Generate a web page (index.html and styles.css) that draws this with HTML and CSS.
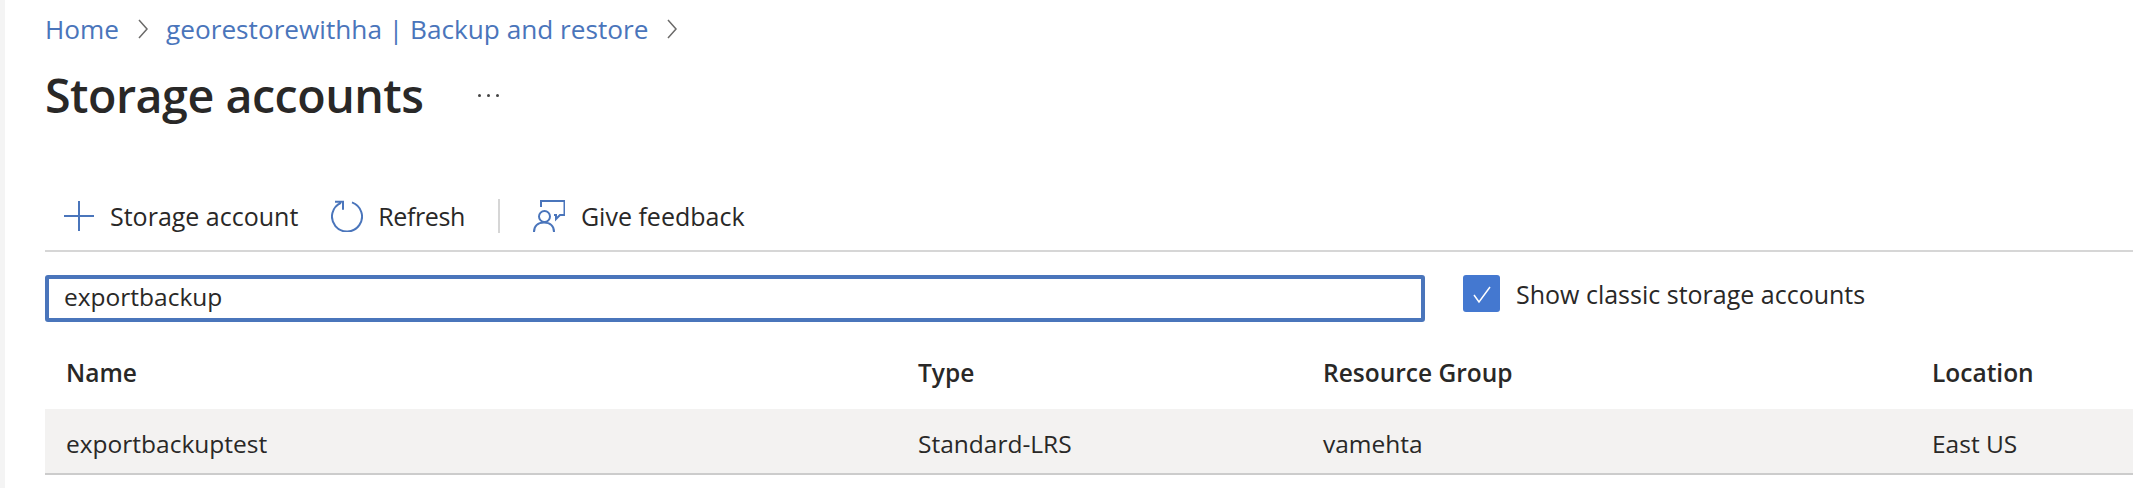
FILE: index.html

```html
<!DOCTYPE html>
<html lang="en">
<head>
    <meta charset="UTF-8">
    <title>Storage accounts</title>
    <link rel="stylesheet" href="styles.css">
</head>
<body>

<div class="page">
    <nav class="crumbs">
        <a>Home</a>
        <svg class="chev" viewBox="0 0 12 22"><path d="M2 2l8 9-8 9"/></svg>
        <a>georestorewithha | Backup and restore</a>
        <svg class="chev" viewBox="0 0 12 22"><path d="M2 2l8 9-8 9"/></svg>
    </nav>

    <div class="title-row">
        <h1>Storage accounts</h1>
        <span class="more">
            <i></i><i></i><i></i>
        </span>
    </div>

    <div class="toolbar">
        <div class="tool tool-add">
            <svg class="icon" viewBox="0 0 32 32"><path d="M16 1v30M1 16h30"/></svg>
            <span>Storage account</span>
        </div>
        <div class="tool tool-refresh">
            <svg class="icon" viewBox="0 0 32 32"><path d="M21 2.400A15 15 0 1 1 10 2.800M4 1.700h8v8"/></svg>
            <span>Refresh</span>
        </div>
        <div class="sep"></div>
        <div class="tool tool-feedback">
            <svg class="icon" viewBox="0 0 32 32"><path d="M8 7V1h23.500v14H27l-4 4v-4h-2M1 32c0-6 4-9.500 10-9.500s10 3.500 10 9.500M11.500 22a5.500 5.500 0 1 0 0-11 5.500 5.500 0 0 0 0 11"/></svg>
            <span>Give feedback</span>
        </div>
    </div>

    <div class="filters">
        <div class="search">exportbackup</div>
        <div class="classic">
            <span class="check"><svg viewBox="0 0 24 24"><path d="M4 13l5 7 11-15"/></svg></span>
            <span>Show classic storage accounts</span>
        </div>
    </div>

    <div class="row head">
        <div>Name</div>
        <div>Type</div>
        <div>Resource Group</div>
        <div>Location</div>
    </div>
    <div class="row item">
        <div>exportbackuptest</div>
        <div>Standard-LRS</div>
        <div>vamehta</div>
        <div>East US</div>
    </div>
</div>

</body>
</html>
```

FILE: styles.css

```css
body {
    margin: 0;
    background: #fff;
    color: #292827;
    font-family: "Open Sans", "Noto Sans", Arial, sans-serif;
    font-size: 24.5px;
}
.page {
    height: 488px;
    box-sizing: border-box;
    padding-left: 40px;
    border-left: 5px solid #f4f4f4;
    overflow: hidden;
}
.crumbs {
    display: flex;
    align-items: center;
    height: 30px;
    padding-top: 14px;
    color: #4a75bb;
    font-size: 26.2px;
}
.chev {
    width: 12px;
    height: 22px;
    margin: 0 17px 0 18px;
}
.chev path {
    fill: none;
    stroke: #6b6a69;
    stroke-width: 1.5;
}
.title-row {
    display: flex;
    align-items: center;
    height: 60px;
    margin-top: 21px;
}
h1 {
    margin: 0;
    font-size: 46.6px;
    font-weight: 600;
    letter-spacing: -0.5px;
}
.more {
    display: flex;
    gap: 6px;
    margin-left: 55px;
}
.more i {
    width: 3px;
    height: 3px;
    background: #444;
    border-radius: 50%;
}
.toolbar {
    display: flex;
    align-items: center;
    height: 64px;
    margin-top: 59px;
    padding-bottom: 2px;
    border-bottom: 2px solid #d6d6d6;
    font-size: 25px;
}
.tool {
    display: flex;
    align-items: center;
    gap: 15px;
}
.icon {
    width: 32px;
    height: 32px;
}
.icon path {
    fill: none;
    stroke: #4a75bb;
    stroke-width: 2;
}
.tool-add {
    margin-left: 18px;
}
.tool-refresh {
    margin-left: 33px;
    letter-spacing: -0.4px;
}
.tool-feedback {
    gap: 16px;
}
.sep {
    width: 2px;
    height: 34px;
    margin: 0 33px 0 33px;
    background: #d6d6d6;
}
.filters {
    display: flex;
    align-items: flex-start;
    margin-top: 23px;
}
.search {
    box-sizing: border-box;
    width: 1380px;
    height: 47px;
    padding-left: 15px;
    line-height: 36px;
    border: 4px solid #4a75bb;
    border-radius: 3px;
}
.classic {
    display: flex;
    align-items: center;
    gap: 16px;
    margin-left: 38px;
    font-size: 25px;
}
.check {
    display: flex;
    align-items: center;
    justify-content: center;
    width: 37px;
    height: 37px;
    background: #4478d0;
    border-radius: 3px;
}
.check svg {
    width: 24px;
    height: 24px;
}
.check path {
    fill: none;
    stroke: #fff;
    stroke-width: 1.5;
}
.row {
    display: grid;
    grid-template-columns: 852px 405px 609px 1fr;
    align-items: center;
    padding-left: 21px;
}
.head {
    box-sizing: border-box;
    height: 87px;
    padding-top: 14px;
    font-weight: 600;
}
.item {
    box-sizing: border-box;
    height: 66px;
    padding-top: 4px;
    background: #f3f2f1;
    border-bottom: 2px solid #cccccc;
}
```
